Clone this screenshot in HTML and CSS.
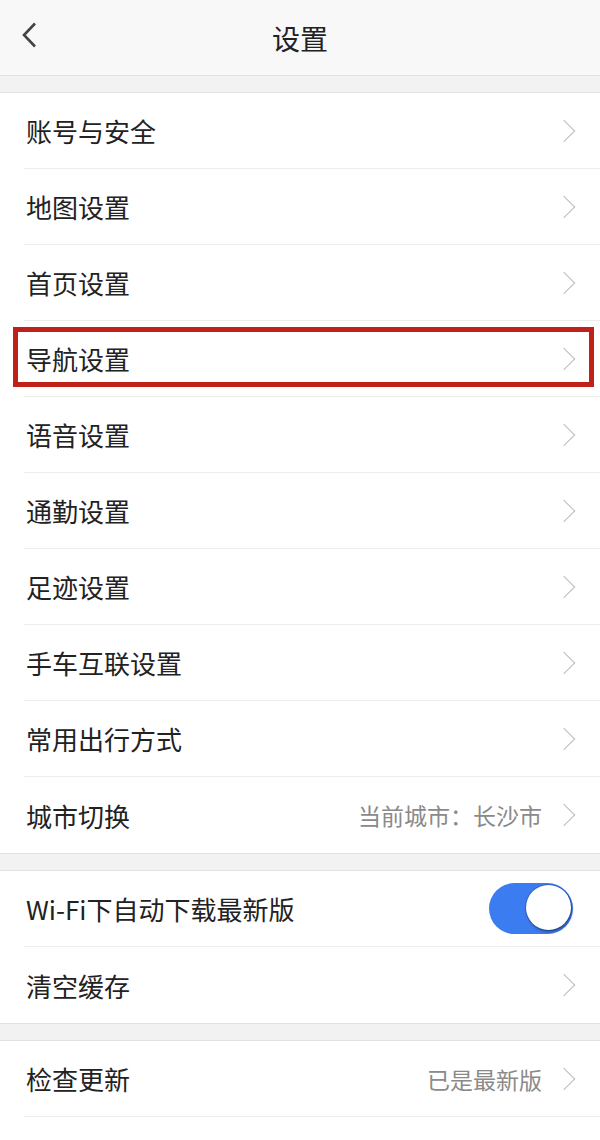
FILE: index.html
```html
<!DOCTYPE html>
<html lang="zh-CN">
<head>
    <meta charset="UTF-8">
    <title>设置</title>
    <link rel="stylesheet" href="styles.css">
</head>
<body>
<div class="page">
    <div class="header">
        <svg class="back" width="16" height="26" viewBox="0 0 16 26"><path d="M14 1.5 L3 13 L14 24.5" fill="none" stroke="#444" stroke-width="2.6"/></svg>
        <div class="title">设置</div>
    </div>

    <div class="gap"></div>
    <div class="group">
        <div class="item"><span class="label">账号与安全</span><i class="arrow"></i></div>
        <div class="item"><span class="label">地图设置</span><i class="arrow"></i></div>
        <div class="item"><span class="label">首页设置</span><i class="arrow"></i></div>
        <div class="item mark"><span class="label">导航设置</span><i class="arrow"></i></div>
        <div class="item"><span class="label">语音设置</span><i class="arrow"></i></div>
        <div class="item"><span class="label">通勤设置</span><i class="arrow"></i></div>
        <div class="item"><span class="label">足迹设置</span><i class="arrow"></i></div>
        <div class="item"><span class="label">手车互联设置</span><i class="arrow"></i></div>
        <div class="item"><span class="label">常用出行方式</span><i class="arrow"></i></div>
        <div class="item last"><span class="label">城市切换</span><span class="value">当前城市：长沙市</span><i class="arrow"></i></div>
    </div>

    <div class="gap"></div>
    <div class="group">
        <div class="item"><span class="label">Wi-Fi下自动下载最新版</span><span class="switch on"><b></b></span></div>
        <div class="item last"><span class="label">清空缓存</span><i class="arrow"></i></div>
    </div>

    <div class="gap"></div>
    <div class="group">
        <div class="item"><span class="label">检查更新</span><span class="value">已是最新版</span><i class="arrow"></i></div>
    </div>
</div>
</body>
</html>
```

FILE: styles.css
```css
* {
    margin: 0;
    padding: 0;
}

body {
    font-family: "Noto Sans CJK SC", "Noto Sans", sans-serif;
    background: #fff;
    color: #222;
}

.page {
    width: 600px;
    height: 1140px;
    overflow: hidden;
    background: #fff;
}

.header {
    height: 75px;
    background: #f8f8f8;
    display: flex;
    align-items: center;
    justify-content: center;
    position: relative;
}

.header .back {
    position: absolute;
    left: 21px;
    top: 22px;
}

.header .title {
    font-size: 28px;
    color: #222;
}

.gap {
    height: 16px;
    background: #f2f2f2;
    border-top: 1px solid #e2e2e2;
    border-bottom: 1px solid #e2e2e2;
}

.group {
    background: #fff;
}

.item {
    height: 75px;
    display: flex;
    align-items: center;
    padding: 0 25px 0 26px;
    position: relative;
    background: #fff;
    border-bottom: 1px solid #ececec;
}

.item::after {
    content: "";
    position: absolute;
    left: 0;
    bottom: -1px;
    width: 24px;
    height: 1px;
    background: #fff;
}

.item.last {
    border-bottom: 0;
    height: 76px;
}

.item.last::after {
    display: none;
}

.item .label {
    flex: 1;
    font-size: 26px;
    color: #222;
}

.item .value {
    font-size: 23px;
    color: #8a8a8a;
    margin-right: 14px;
}

.arrow {
    width: 15px;
    height: 15px;
    border-top: 1.6px solid #bcbcbc;
    border-right: 1.6px solid #bcbcbc;
    transform: rotate(45deg);
    margin-right: 3px;
}

.item.mark::before {
    content: "";
    position: absolute;
    left: 13px;
    right: 6px;
    top: 6px;
    bottom: 9px;
    border: 5px solid #c0201a;
    z-index: 1;
}

.switch {
    width: 84px;
    height: 51px;
    border-radius: 26px;
    background: #3b7cf0;
    position: relative;
    margin-right: 2px;
}

.switch b {
    position: absolute;
    right: 2px;
    top: 2px;
    width: 45px;
    height: 45px;
    border-radius: 50%;
    background: #fff;
    box-shadow: 1px 2px 3px rgba(0, 0, 0, .35), 0 0 0 1px #2f66cc;
}
```
